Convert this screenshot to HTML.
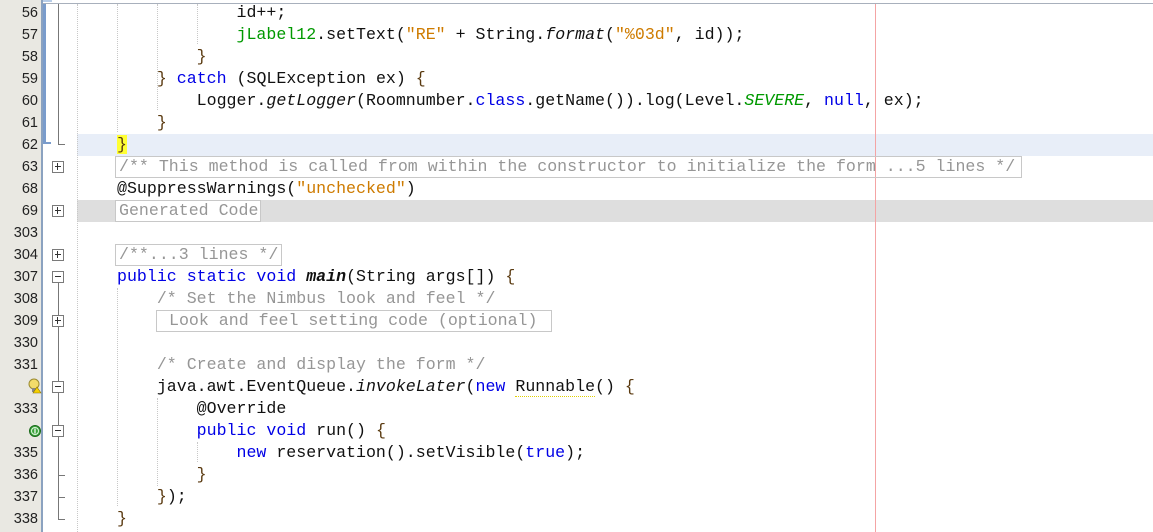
<!DOCTYPE html>
<html><head><meta charset="utf-8"><style>
*{margin:0;padding:0;box-sizing:border-box}
body{width:1153px;height:532px;overflow:hidden;background:#fff;position:relative;font-family:"Liberation Mono",monospace;font-size:16.6px}
.g{position:absolute;left:0;top:0;width:41px;height:532px;background:#e9e8e2}
.gb{position:absolute;left:41px;top:0;width:2px;height:532px;background:#8ba2c0}
.n{position:absolute;left:0;width:38px;text-align:right;font-family:"Liberation Sans",sans-serif;font-size:14.5px;color:#222;height:22px;line-height:22px}
.l{position:absolute;left:117px;height:22px;line-height:22px;white-space:pre;color:#111}
.k{color:#0000e6}.s{color:#ce7b00}.c{color:#969696}.f{color:#009900}.i{font-style:italic}.b{color:#5a3a10}
.gd{color:#009900;font-style:italic}
.dv{position:absolute;width:0;border-left:1px dotted #c8c8c8}
.box{position:absolute;left:52px;width:12px;height:12px;border:1px solid #7a7a7a;background:#fff}
.box:before{content:"";position:absolute;left:2px;top:4px;width:6px;height:1px;background:#333}
.plus:after{content:"";position:absolute;left:4px;top:1px;width:1px;height:7px;background:#333}
.vl{position:absolute;left:58px;width:1px;background:#777}
.hl{position:absolute;left:58px;height:1px;width:7px;background:#777}
.fold{position:absolute;border:1px solid #c8c8c8;height:22px}
</style></head><body>
<div style="position:absolute;left:0;top:0;width:52px;height:2px;background:#b8cde8"></div>
<div style="position:absolute;left:43px;top:3px;width:1110px;height:1px;background:#a8b0bc"></div>
<div style="position:absolute;left:77px;top:134px;width:1076px;height:22px;background:#e8eef8"></div>
<div style="position:absolute;left:77px;top:200px;width:1076px;height:22px;background:#dedede"></div>
<div class="g"></div><div class="gb" style="top:0;height:532px"></div>
<div style="position:absolute;left:43px;top:4px;width:3px;height:140px;background:#7a9ccc"></div>
<div style="position:absolute;left:43px;top:142px;width:8px;height:2px;background:#7a9ccc"></div>
<div class="dv" style="left:77px;top:4px;height:528px"></div>
<div class="dv" style="left:117px;top:4px;height:128px"></div>
<div class="dv" style="left:157px;top:4px;height:106px"></div>
<div class="dv" style="left:197px;top:4px;height:40px"></div>
<div class="dv" style="left:117px;top:288px;height:218px"></div>
<div class="dv" style="left:157px;top:398px;height:88px"></div>
<div class="dv" style="left:197px;top:442px;height:20px"></div>
<div style="position:absolute;left:875px;top:4px;width:1px;height:528px;background:#f4a4a4"></div>
<div class="vl" style="top:4px;height:141px"></div><div class="hl" style="top:144px"></div>
<div class="vl" style="top:283px;height:236px"></div>
<div class="hl" style="top:475px"></div><div class="hl" style="top:497px"></div><div class="hl" style="top:519px"></div>
<div class="box plus" style="top:161px"></div>
<div class="box plus" style="top:205px"></div>
<div class="box plus" style="top:249px"></div>
<div class="box" style="top:271px"></div>
<div class="box plus" style="top:315px"></div>
<div class="box" style="top:381px"></div>
<div class="box" style="top:425px"></div>
<div class="n" style="top:2px">56</div><div class="n" style="top:24px">57</div><div class="n" style="top:46px">58</div><div class="n" style="top:68px">59</div><div class="n" style="top:90px">60</div><div class="n" style="top:112px">61</div><div class="n" style="top:134px">62</div><div class="n" style="top:156px">63</div><div class="n" style="top:178px">68</div><div class="n" style="top:200px">69</div><div class="n" style="top:222px">303</div><div class="n" style="top:244px">304</div><div class="n" style="top:266px">307</div><div class="n" style="top:288px">308</div><div class="n" style="top:310px">309</div><div class="n" style="top:332px">330</div><div class="n" style="top:354px">331</div><div class="n" style="top:398px">333</div><div class="n" style="top:442px">335</div><div class="n" style="top:464px">336</div><div class="n" style="top:486px">337</div><div class="n" style="top:508px">338</div>
<svg style="position:absolute;left:28px;top:378px" width="14" height="16" viewBox="0 0 14 16"><circle cx="6" cy="6" r="5" fill="#f3dc6a" stroke="#9a8a30"/><rect x="4" y="10" width="4" height="4" fill="#888"/><path d="M9 9 L13 15 L5 15 Z" fill="#f5d000" stroke="#8a7000" stroke-width=".6"/></svg>
<svg style="position:absolute;left:29px;top:425px" width="12" height="12" viewBox="0 0 12 12"><circle cx="6" cy="6" r="5.5" fill="#3fa63f" stroke="#1a6a1a"/><circle cx="6" cy="6" r="3.5" fill="none" stroke="#dff5df"/><path d="M6 3.5V8.5" stroke="#fff" stroke-width="1.2"/></svg>
<div class="l" style="top:2px">            id++;</div>
<div class="l" style="top:24px">            <span class="f">jLabel12</span>.setText(<span class="s">"RE"</span> + String.<span class="i">format</span>(<span class="s">"%03d"</span>, id));</div>
<div class="l" style="top:46px">        <span class="b">}</span></div>
<div class="l" style="top:68px">    <span class="b">}</span> <span class="k">catch</span> (SQLException ex) <span class="b">{</span></div>
<div class="l" style="top:90px">        Logger.<span class="i">getLogger</span>(Roomnumber.<span class="k">class</span>.getName()).log(Level.<span class="gd">SEVERE</span>, <span class="k">null</span>, ex);</div>
<div class="l" style="top:112px">    <span class="b">}</span></div>
<div class="l" style="top:134px"><span class="b" style="background:#ffff33">}</span></div>
<div class="fold" style="left:115px;top:156px;width:907px"></div>
<div class="l c" style="top:156px;left:119px">/** This method is called from within the constructor to initialize the form ...5 lines */</div>
<div class="l" style="top:178px">@SuppressWarnings(<span class="s">"unchecked"</span>)</div>
<div class="fold" style="left:115px;top:200px;width:146px;background:#fff"></div>
<div class="l c" style="top:200px;left:119px">Generated Code</div>
<div class="fold" style="left:115px;top:244px;width:167px"></div>
<div class="l c" style="top:244px;left:119px">/**...3 lines */</div>
<div class="l" style="top:266px"><span class="k">public static void</span> <b class="i">main</b>(String args[]) <span class="b">{</span></div>
<div class="l c" style="top:288px">    /* Set the Nimbus look and feel */</div>
<div class="fold" style="left:156px;top:310px;width:396px"></div>
<div class="l c" style="top:310px;left:169px">Look and feel setting code (optional)</div>
<div class="l c" style="top:354px">    /* Create and display the form */</div>
<div class="l" style="top:376px">    java.awt.EventQueue.<span class="i">invokeLater</span>(<span class="k">new</span> <span style="border-bottom:1px dotted #e0d000">Runnable</span>() <span class="b">{</span></div>
<div class="l" style="top:398px">        @Override</div>
<div class="l" style="top:420px">        <span class="k">public void</span> run() <span class="b">{</span></div>
<div class="l" style="top:442px">            <span class="k">new</span> reservation().setVisible(<span class="k">true</span>);</div>
<div class="l" style="top:464px">        <span class="b">}</span></div>
<div class="l" style="top:486px">    <span class="b">}</span>);</div>
<div class="l" style="top:508px"><span class="b">}</span></div>
</body></html>
